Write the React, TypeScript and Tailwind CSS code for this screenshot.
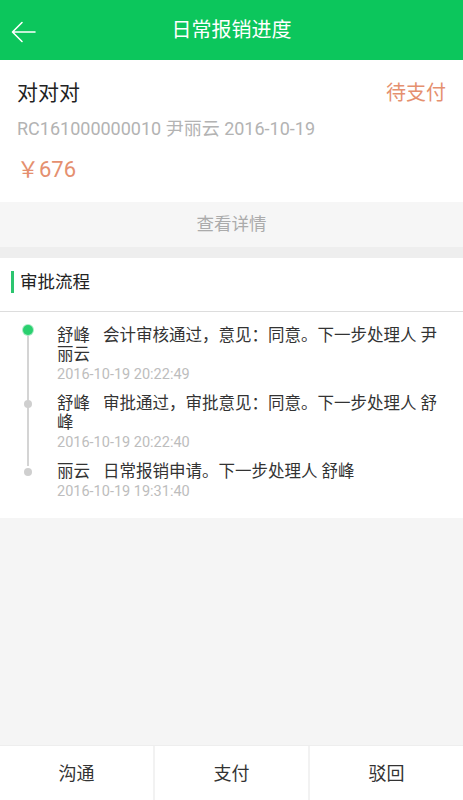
import React from "react";

const font = { fontFamily: "Roboto, 'Noto Sans CJK SC', sans-serif" };

type Item = { name: string; text: string; time: string; active?: boolean; last?: boolean };

const items: Item[] = [
  { name: "舒峰", text: "会计审核通过，意见：同意。下一步处理人 尹丽云", time: "2016-10-19 20:22:49", active: true },
  { name: "舒峰", text: "审批通过，审批意见：同意。下一步处理人 舒峰", time: "2016-10-19 20:22:40" },
  { name: "丽云", text: "日常报销申请。下一步处理人 舒峰", time: "2016-10-19 19:31:40", last: true },
];

export default function App() {
  return (
    <div className="flex h-[800px] w-[463px] flex-col bg-[#f5f5f5]" style={font}>
      <div className="relative flex h-[60px] shrink-0 items-center justify-center bg-[#0cc65c]">
        <svg className="absolute left-[11px] top-[21px]" width="25" height="22" viewBox="0 0 25 22" fill="none">
          <path d="M24 11H2M11 1.5L1.5 11L11 20.5" stroke="white" strokeWidth="1.6" strokeLinecap="round" strokeLinejoin="round" />
        </svg>
        <span className="text-[20px] leading-[26px] text-white">日常报销进度</span>
      </div>

      <div className="bg-white px-[17px] pb-[19px] pt-[20px]">
        <div className="flex items-center justify-between">
          <span className="text-[21px] leading-[26px] text-[#222]">对对对</span>
          <span className="text-[20px] leading-[26px] text-[#e5906f]">待支付</span>
        </div>
        <div className="mt-[12px] text-[18px] leading-[22px] text-[#b3b3b3]">RC161000000010 尹丽云 2016-10-19</div>
        <div className="mt-[17px] text-[22px] leading-[26px] text-[#e5906f]">￥676</div>
      </div>

      <div className="flex h-[45px] items-center justify-center bg-[#f6f6f6] text-[17.5px] text-[#ababab]">查看详情</div>
      <div className="h-[11px] bg-[#eeeeee]" />

      <div className="bg-white">
        <div className="flex h-[54px] items-center border-b border-[#dddddd] pb-[5px]">
          <div className="ml-[11px] mr-[6px] h-[22px] w-[3px] bg-[#2cc56f]" />
          <span className="text-[17.5px] text-[#222]">审批流程</span>
        </div>
        <div className="pb-[16px] pl-[57px] pr-[17px] pt-[14px]">
          {items.map((it, i) => (
            <div key={i} className={`relative ${i > 0 ? "mt-[9px]" : ""}`}>
              {!it.last && (
                <div className="absolute left-[-30px] top-[4px] h-[calc(100%+9px)] w-[2px] bg-[#d4d4d4]" />
              )}
              {it.active ? (
                <div className="absolute left-[-35px] top-[-2px] flex h-[12px] w-[12px] items-center justify-center rounded-full bg-[#a8ebc4]">
                  <div className="h-[10px] w-[10px] rounded-full bg-[#2ad06f]" />
                </div>
              ) : (
                <div className="absolute left-[-33px] top-[6px] h-[8px] w-[8px] rounded-full bg-[#cfcfcf]" />
              )}
              <div className="text-[16.5px] leading-[19px] text-[#333]">
                <span className="mr-[13px]">{it.name}</span>
                {it.text}
              </div>
              <div className="mt-[1px] text-[14.5px] leading-[20px] text-[#bdbdbd]">{it.time}</div>
            </div>
          ))}
        </div>
      </div>

      <div className="flex-1" />

      <div className="grid h-[55px] shrink-0 grid-cols-3 gap-[2px] border-t border-[#eeeeee] bg-[#f2f2f2]">
        {["沟通", "支付", "驳回"].map((t) => (
          <div key={t} className="flex items-center justify-center bg-white text-[18px] text-[#333]">
            {t}
          </div>
        ))}
      </div>
    </div>
  );
}
